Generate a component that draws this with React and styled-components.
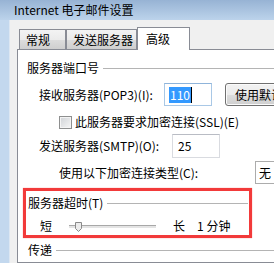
import React from 'react'
import styled, { createGlobalStyle } from 'styled-components'

const GlobalStyle = createGlobalStyle`
    html, body {
        margin: 0;
        padding: 0;
        overflow: hidden;
    }
    body {
        font-family: "Noto Sans CJK SC", "Liberation Sans", sans-serif;
        font-size: 12px;
        line-height: 16px;
        color: #000;
    }
    * {
        box-sizing: border-box;
    }
`

const Settings = () => {
    return (
        <Window>
            <GlobalStyle />
            <TitleBar>Internet 电子邮件设置</TitleBar>
            <Frame>
                <Body>
                    <Tabs>
                        <Tab width={47}>常规</Tab>
                        <Tab width={71}>发送服务器</Tab>
                        <Tab width={53} $active>高级</Tab>
                    </Tabs>
                    <Panel>
                        <GroupHeader $mt={10} $indent={9}>服务器端口号</GroupHeader>
                        <Row $mt={7} $indent={21} $h={23}>
                            <Label width={125}>接收服务器(POP3)(I):</Label>
                            <TextBox width={48} $focused>
                                <Selected>110</Selected>
                            </TextBox>
                            <Button>使用默认值(D)</Button>
                        </Row>
                        <Row $mt={8} $indent={41} $h={16}>
                            <CheckBox />
                            <CheckLabel>此服务器要求加密连接(SSL)(E)</CheckLabel>
                        </Row>
                        <Row $mt={4} $indent={21} $h={24}>
                            <Label width={133}>发送服务器(SMTP)(O):</Label>
                            <TextBox width={48}>25</TextBox>
                        </Row>
                        <Row $mt={3} $indent={41} $h={23}>
                            <Label width={196}>使用以下加密连接类型(C):</Label>
                            <Select>无</Select>
                        </Row>
                        <Highlight>
                            <GroupHeader $mt={0} $indent={0}>服务器超时(T)</GroupHeader>
                            <Row $mt={7} $indent={12} $h={16}>
                                <span>短</span>
                                <Track>
                                    <Thumb width='7' height='10' viewBox='0 0 7 10'>
                                        <path
                                            d='M0.5 0.5 H6.5 V6.5 L3.5 9.5 L0.5 6.5 Z'
                                            fill='#ececec'
                                            stroke='#8a8a8a'
                                        />
                                    </Thumb>
                                </Track>
                                <Long>长</Long>
                                <Minutes>1 分钟</Minutes>
                            </Row>
                        </Highlight>
                        <GroupHeader $mt={4} $indent={10}>传递</GroupHeader>
                    </Panel>
                </Body>
            </Frame>
        </Window>
    )
}

const Window = styled.div`
    width: 274px;
    height: 263px;
    overflow: hidden;
    display: flex;
    flex-direction: column;
    background: #c3d8ee;
`

const TitleBar = styled.div`
    height: 20px;
    flex: none;
    display: flex;
    align-items: center;
    padding-left: 14px;
    background: linear-gradient(#97b3d4, #bcd3eb);
    white-space: nowrap;
`

const Frame = styled.div`
    flex: 1;
    min-height: 0;
    display: flex;
    padding-left: 9px;
`

const Body = styled.div`
    flex: 1;
    min-width: 0;
    display: flex;
    flex-direction: column;
    padding: 7px 0 0 7px;
    border-left: 1px solid #dde7f2;
    background: #f0f0f0;
    overflow: hidden;
`

const Tabs = styled.div`
    height: 22px;
    flex: none;
    display: flex;
    align-items: flex-end;
    padding-left: 2px;
`

const Tab = styled.div`
    position: relative;
    z-index: 1;
    width: ${props => props.width}px;
    height: ${props => (props.$active ? 23 : 20)}px;
    margin-bottom: ${props => (props.$active ? -1 : 0)}px;
    display: flex;
    align-items: center;
    padding-left: ${props => (props.$active ? 8 : 6)}px;
    border: 1px solid #898c95;
    border-bottom: none;
    background: ${props =>
        props.$active
            ? '#fff'
            : 'linear-gradient(#f3f3f3, #ebebeb 50%, #dddddd 51%, #cfcfcf)'};
    white-space: nowrap;
`

const Panel = styled.div`
    width: 300px;
    flex: 1;
    display: flex;
    flex-direction: column;
    border: 1px solid #898c95;
    background: #fff;
`

const GroupHeader = styled.div`
    height: 16px;
    flex: none;
    display: flex;
    align-items: center;
    gap: 4px;
    margin: ${props => props.$mt}px 0 0 ${props => props.$indent}px;
    white-space: nowrap;

    &::after {
        content: '';
        flex: 1;
        height: 1px;
        background: #b4b4b4;
    }
`

const Row = styled.div`
    height: ${props => props.$h}px;
    flex: none;
    display: flex;
    align-items: center;
    margin-top: ${props => props.$mt}px;
    padding-left: ${props => props.$indent}px;
    white-space: nowrap;
`

const Label = styled.span`
    width: ${props => props.width}px;
    flex: none;
`

const TextBox = styled.div`
    width: ${props => props.width}px;
    height: 100%;
    flex: none;
    display: flex;
    align-items: center;
    padding-left: ${props => (props.$focused ? 4 : 5)}px;
    border: 1px solid ${props => (props.$focused ? '#a9c8e6' : '#d9dbe0')};
    border-top-color: ${props => (props.$focused ? '#8fb4da' : '#b9bcc4')};
    background: #fff;
`

const Selected = styled.span`
    padding: 0 1px;
    background: #3399ff;
    color: #fff;
    border-right: 1px solid #000;
`

const Button = styled.div`
    width: 90px;
    height: 100%;
    flex: none;
    display: flex;
    align-items: center;
    margin-left: 13px;
    padding-left: 9px;
    border: 1px solid #707070;
    border-radius: 3px;
    box-shadow: inset 0 0 0 1px #fbfbfb;
    background: linear-gradient(#f2f2f2, #ebebeb 50%, #dddddd 51%, #cfcfcf);
`

const CheckBox = styled.span`
    width: 13px;
    height: 13px;
    flex: none;
    border: 1px solid #8e8f8f;
    box-shadow: inset 0 0 0 1px #f4f4f4;
    background: linear-gradient(135deg, #cfd2d6, #f6f6f6);
`

const CheckLabel = styled.span`
    margin-left: 3px;
`

const Select = styled.div`
    width: 40px;
    height: 100%;
    flex: none;
    display: flex;
    align-items: center;
    padding-left: 3px;
    border: 1px solid #acacac;
    background: #fff;
`

const Highlight = styled.div`
    width: 229px;
    height: 50px;
    flex: none;
    display: flex;
    flex-direction: column;
    margin: 4px 0 0 5px;
    padding: 4px 1px 0 2px;
    border: 3px solid #f23a3a;
    box-shadow: 0 0 1px rgba(255, 60, 60, 0.6);
`

const Track = styled.div`
    position: relative;
    width: 87px;
    height: 3px;
    flex: none;
    margin-left: 17px;
    border-top: 1px solid #a8a8a8;
    background: #e4e4e4;
`

const Thumb = styled.svg`
    position: absolute;
    left: 6px;
    top: -4px;
    display: block;
`

const Long = styled.span`
    margin-left: 17px;
`

const Minutes = styled.span`
    margin-left: 12px;
`

export default Settings
